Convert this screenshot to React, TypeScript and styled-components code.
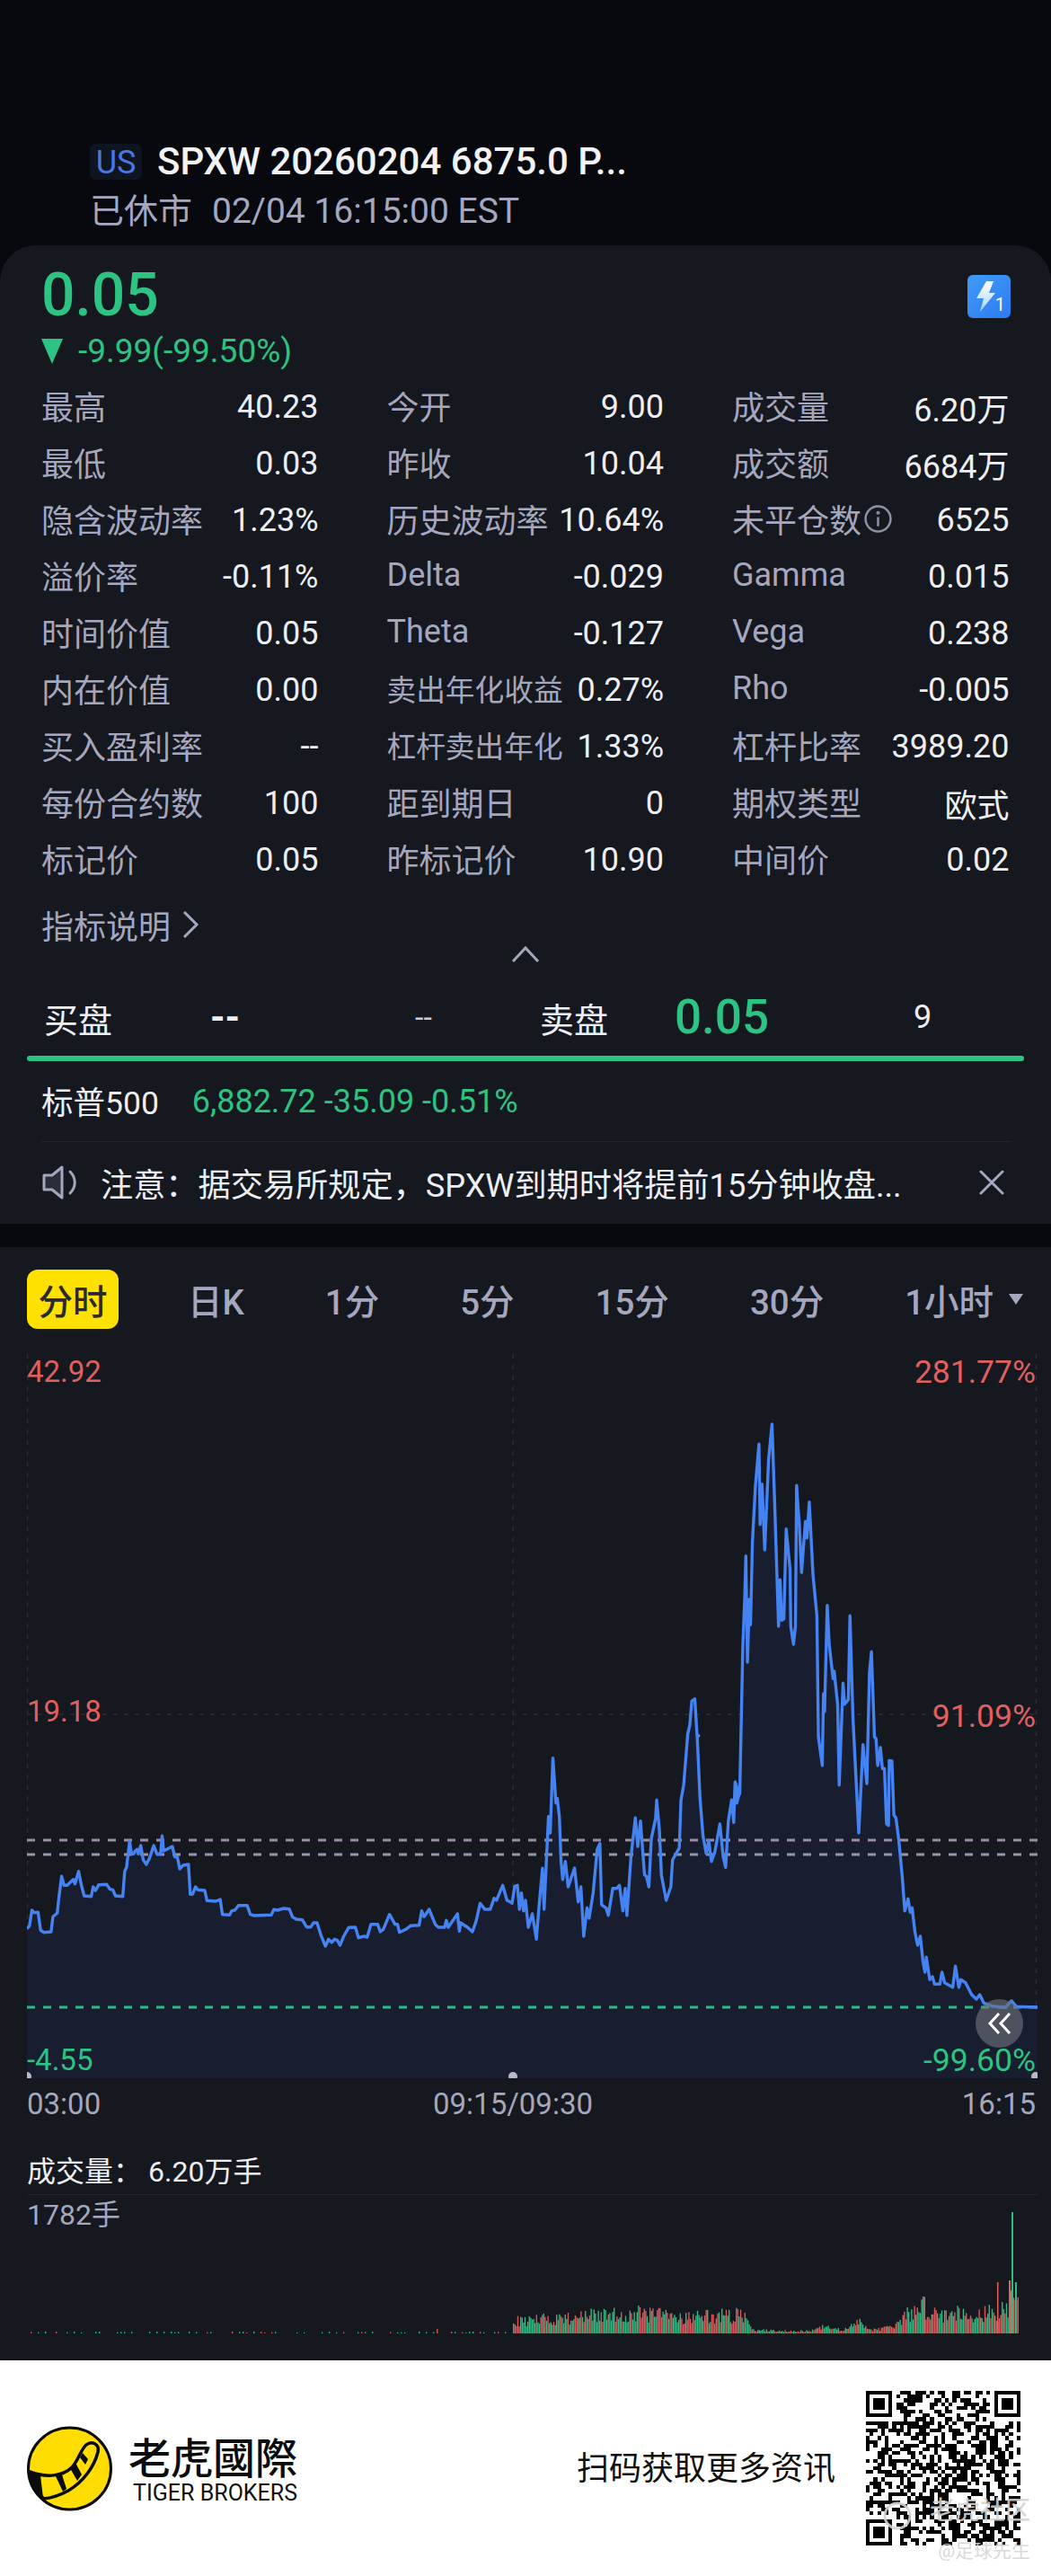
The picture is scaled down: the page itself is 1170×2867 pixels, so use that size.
import React from 'react';
import styled, { createGlobalStyle } from 'styled-components';

const GREEN = '#2dc382';
const RED = '#e0605f';
const MUTED = '#a5a7be';
const PANEL = '#16181f';

const GlobalStyle = createGlobalStyle`
  html, body {
    margin: 0;
    padding: 0;
    background: #07090f;
    font-family: Roboto, "Noto Sans CJK SC", sans-serif;
  }
`;

const Page = styled.div`
  width: 1170px;
  height: 2867px;
  display: flex;
  flex-direction: column;
  background: #07090f;
  overflow: hidden;
`;

/* header */
const Header = styled.header`
  height: 273px;
  box-sizing: border-box;
  padding: 158px 0 0 100px;
`;

const TitleRow = styled.div`
  display: flex;
  align-items: center;
  gap: 17px;
  height: 44px;
`;

const MarketBadge = styled.span`
  width: 58px;
  height: 40px;
  border-radius: 7px;
  background: #0e1420;
  color: #4a78e0;
  font-size: 36px;
  line-height: 42px;
  text-align: center;
`;

const Title = styled.div`
  color: #f2f2f5;
  font-size: 42px;
  font-weight: 500;
  line-height: 44px;
`;

const StatusLine = styled.div`
  margin-top: 11px;
  color: ${MUTED};
  font-size: 38px;
  line-height: 44px;
  display: flex;
  gap: 22px;
`;

const StatusTime = styled.span`
  font-size: 39px;
`;

/* quote card */
const Card = styled.section`
  height: 1089px;
  background: ${PANEL};
  border-radius: 40px 40px 0 0;
  box-sizing: border-box;
  padding-top: 23px;
`;

const PriceRow = styled.div`
  display: flex;
  justify-content: space-between;
  padding: 0 45px 0 46px;
`;

const Price = styled.div`
  color: ${GREEN};
  font-size: 66px;
  font-weight: 500;
  line-height: 66px;
`;

const Change = styled.div`
  display: flex;
  align-items: center;
  gap: 17px;
  margin-top: 9px;
  color: ${GREEN};
  font-size: 37px;
  line-height: 40px;
`;

const DownArrow = styled.span`
  width: 0;
  height: 0;
  border-left: 12px solid transparent;
  border-right: 12px solid transparent;
  border-top: 28px solid ${GREEN};
`;

const FlashBadge = styled.div`
  position: relative;
  width: 48px;
  height: 48px;
  margin-top: 10px;
  border-radius: 6px;
  background: linear-gradient(140deg, #3f9bf8, #2f7bf0);
  display: flex;
  align-items: center;
  padding-left: 8px;
  box-sizing: border-box;
`;

const FlashCount = styled.span`
  position: absolute;
  right: 6px;
  bottom: 5px;
  color: #fff;
  font-size: 20px;
  line-height: 20px;
`;

const StatsGrid = styled.div`
  display: grid;
  grid-template-columns: repeat(3, 308.5px);
  column-gap: 76px;
  grid-auto-rows: 62.9px;
  padding-left: 46px;
  margin-top: 10px;
`;

const Stat = styled.div`
  display: flex;
  align-items: center;
  justify-content: space-between;
  font-size: 36px;
`;

const StatLabel = styled.span<{ $long: boolean }>`
  display: flex;
  align-items: center;
  margin-bottom: 2px;
  color: ${MUTED};
  font-size: ${(p) => (p.$long ? '32.7px' : '36px')};
`;

const StatValue = styled.span`
  margin-top: 2px;
  color: #eceef2;
`;

const InfoIcon = styled.svg`
  width: 33px;
  height: 33px;
  margin-left: 2px;
`;

const GuideLink = styled.div`
  display: flex;
  align-items: center;
  gap: 12px;
  margin: 22px 0 0 46px;
  height: 40px;
  color: ${MUTED};
  font-size: 36px;
`;

const CollapseRow = styled.div`
  display: flex;
  justify-content: center;
  height: 20px;
  margin-top: 3px;
`;

const QuoteRow = styled.div`
  display: grid;
  grid-template-columns: 185px 228px 139px 150px 266px auto;
  align-items: center;
  height: 60px;
  margin-top: 29px;
  padding-left: 49px;
  color: #eceef2;
  font-size: 38px;
`;

const BoldDash = styled.span`
  font-size: 42px;
  font-weight: 700;
`;

const SmallDash = styled.span`
  font-size: 34px;
  color: #c9cad6;
`;

const AskPrice = styled.span`
  color: ${GREEN};
  font-size: 53px;
  font-weight: 500;
`;

const QuoteSize = styled.span`
  font-size: 36px;
`;

const DepthBar = styled.div`
  height: 6px;
  margin: 14px 30px 0;
  border-radius: 3px;
  background: ${GREEN};
`;

const IndexRow = styled.div`
  display: flex;
  align-items: center;
  gap: 37px;
  height: 50px;
  margin: 20px 45px 0 46px;
  padding-bottom: 19px;
  border-bottom: 1px solid #23262f;
  color: #eceef2;
  font-size: 35.5px;
`;

const IndexName = styled.span`
  margin-bottom: 3px;
`;

const IndexValue = styled.span`
  color: ${GREEN};
  font-size: 36px;
`;

const Notice = styled.div`
  display: flex;
  align-items: center;
  height: 50px;
  margin: 20px 52px 0 47px;
  color: #eceef2;
  font-size: 36.2px;
`;

const NoticeText = styled.span`
  flex: 1;
  margin-left: 25px;
  white-space: nowrap;
`;

/* chart section */
const ChartSection = styled.section`
  margin-top: 26px;
  height: 1239px;
  background: ${PANEL};
  box-sizing: border-box;
  padding: 25px 15px 0 30px;
`;

const Tabs = styled.div`
  display: flex;
  align-items: center;
  gap: 90px;
  height: 66px;
  color: ${MUTED};
  font-size: 38.5px;
  font-weight: 500;
`;

const Tab = styled.span<{ $active?: boolean }>`
  display: flex;
  align-items: center;
  white-space: nowrap;
  ${(p) =>
    p.$active &&
    `
    background: #ffe100;
    color: #2a2a2e;
    width: 102px;
    height: 66px;
    border-radius: 12px;
    justify-content: center;
    margin-right: -13px;
  `}
`;

const TabCaret = styled.span`
  width: 0;
  height: 0;
  margin-left: 17px;
  border-left: 8px solid transparent;
  border-right: 8px solid transparent;
  border-top: 12px solid ${MUTED};
`;

const PriceChart = styled.div`
  position: relative;
  width: 1125px;
  height: 806px;
  margin-top: 28px;
`;

const ChartSvg = styled.svg`
  display: block;
`;

const AxisLabel = styled.span<{ $top: number; $right?: boolean; $up?: boolean }>`
  position: absolute;
  top: ${(p) => p.$top}px;
  ${(p) => (p.$right ? 'right: 2px; font-size: 35.5px;' : 'left: 0; font-size: 33px;')}
  color: ${(p) => (p.$up ? RED : GREEN)};
  line-height: 40px;
`;

const ScrollButton = styled.div`
  position: absolute;
  left: 1056px;
  top: 718px;
  width: 53px;
  height: 54px;
  border-radius: 50%;
  background: rgba(112, 114, 124, 0.62);
  display: flex;
  align-items: center;
  justify-content: center;
`;

const TimeAxis = styled.div`
  display: grid;
  grid-template-columns: 452px auto 1fr;
  height: 40px;
  width: 1123px;
  margin-top: 9px;
  color: ${MUTED};
  font-size: 33px;
  line-height: 40px;
`;

const TimeEnd = styled.span`
  justify-self: end;
`;

const VolumeTitle = styled.div`
  margin-top: 35px;
  height: 40px;
  color: #eceef2;
  font-size: 32px;
  line-height: 40px;
  display: flex;
  gap: 7px;
`;

const VolumeChart = styled.div`
  position: relative;
  width: 1125px;
  margin-top: 5px;
  border-top: 1px solid #21242c;
`;

const VolumeMax = styled.span`
  position: absolute;
  left: 0;
  top: 2px;
  color: ${MUTED};
  font-size: 32px;
  line-height: 40px;
`;

/* footer */
const Footer = styled.footer`
  position: relative;
  flex: 1;
  background: #fff;
  display: flex;
  align-items: center;
  padding: 0 34px 0 30px;
`;

const Brand = styled.div`
  display: flex;
  align-items: center;
  gap: 18px;
`;

const BrandText = styled.div`
  display: flex;
  flex-direction: column;
  align-items: flex-end;
`;

const BrandName = styled.div`
  color: #0c0c0c;
  font-family: "Noto Sans CJK TC", sans-serif;
  font-size: 47px;
  font-weight: 500;
  line-height: 52px;
`;

const BrandLatin = styled.div`
  margin-top: 3px;
  color: #111;
  font-size: 25px;
  line-height: 26px;
`;

const ScanText = styled.div`
  margin-left: auto;
  margin-right: 34px;
  margin-top: -6px;
  color: #111;
  font-size: 36px;
`;

const Watermark = styled.span`
  position: absolute;
  right: 23px;
  color: rgba(212, 212, 212, 0.9);
  line-height: 1;
`;

const WatermarkSite = styled(Watermark)`
  top: 154px;
  font-size: 28px;
  font-weight: 500;
`;

const WatermarkUser = styled(Watermark)`
  top: 202px;
  font-size: 21px;
`;

const WatermarkRing = styled.svg`
  position: absolute;
  left: 982px;
  top: 156px;
`;

/* data */
const stats: { label: string; value: string; info?: boolean }[] = [
  { label: '最高', value: '40.23' },
  { label: '今开', value: '9.00' },
  { label: '成交量', value: '6.20万' },
  { label: '最低', value: '0.03' },
  { label: '昨收', value: '10.04' },
  { label: '成交额', value: '6684万' },
  { label: '隐含波动率', value: '1.23%' },
  { label: '历史波动率', value: '10.64%' },
  { label: '未平仓数', value: '6525', info: true },
  { label: '溢价率', value: '-0.11%' },
  { label: 'Delta', value: '-0.029' },
  { label: 'Gamma', value: '0.015' },
  { label: '时间价值', value: '0.05' },
  { label: 'Theta', value: '-0.127' },
  { label: 'Vega', value: '0.238' },
  { label: '内在价值', value: '0.00' },
  { label: '卖出年化收益', value: '0.27%' },
  { label: 'Rho', value: '-0.005' },
  { label: '买入盈利率', value: '--' },
  { label: '杠杆卖出年化', value: '1.33%' },
  { label: '杠杆比率', value: '3989.20' },
  { label: '每份合约数', value: '100' },
  { label: '距到期日', value: '0' },
  { label: '期权类型', value: '欧式' },
  { label: '标记价', value: '0.05' },
  { label: '昨标记价', value: '10.90' },
  { label: '中间价', value: '0.02' },
];

// traced from the reference, three stretches at different scales
const morning = [
  0,350, 8,340, 16,288, 24,296, 36,295, 44,355, 55,362, 78,360, 84,310, 98,298, 104,240, 112,175, 120,205, 130,205,
  150,185, 155,200, 167,158, 176,205, 185,240, 208,242, 214,210, 222,222, 232,203, 258,202, 268,218, 278,220, 286,240,
  310,242, 316,158, 322,145, 332,58, 338,100, 345,100, 350,90, 356,85, 360,100, 368,72, 376,120, 386,135, 396,115,
  410,72, 420,100, 432,100, 437,40, 442,90, 470,75, 478,110, 486,110, 494,150, 505,138, 522,135, 528,235, 535,235,
  545,210, 552,220, 575,222, 582,256, 610,258, 625,252, 632,302, 655,304, 662,290, 672,288, 684,272, 712,272, 722,302,
  735,306, 790,304, 798,286, 810,288, 830,282, 848,284, 858,310, 870,318, 890,320, 904,344, 918,344, 926,330, 938,330,
  950,370, 965,408, 975,385, 985,395, 995,385, 1003,388, 1012,405, 1024,375, 1040,346, 1062,345, 1072,380, 1090,375,
  1100,378, 1112,335, 1134,335, 1142,360, 1152,352, 1172,302, 1190,335, 1198,335, 1204,362, 1225,352, 1240,340,
  1268,338, 1276,290, 1284,310, 1300,285, 1320,335, 1330,345, 1350,345, 1356,322, 1362,345, 1392,300, 1398,358,
  1402,330, 1424,345, 1440,360, 1452,325, 1465,265, 1480,285, 1498,285, 1510,248, 1518,255, 1538,205, 1552,255, 1565,262,
];
const open1 = [
  0,655, 8,598, 16,595, 22,675, 28,620, 34,680, 40,645, 48,735, 60,690, 72,775, 80,665, 90,538, 95,675, 108,365, 113,420,
  121,170, 130,320, 134,305, 140,365, 145,515, 150,575, 158,515, 166,600, 185,537, 196,650, 204,600, 212,765, 222,670,
  228,705, 240,620, 252,475, 260,455, 265,660, 278,670, 285,695, 298,605, 310,605, 318,595, 328,680, 335,605, 340,695,
  352,500, 365,370, 372,465, 380,380, 392,560, 398,565, 405,600, 412,440, 425,370, 428,310, 436,408, 442,560, 456,645,
  470,600, 475,510, 485,490, 495,470, 500,310, 508,260, 520,90, 526,60,
];
const peak1 = [632,1180, 640,1172, 646,1300, 650,1295];
const open2 = [
  548,100, 556,300, 565,430, 575,490, 582,445, 590,515, 600,485, 615,390, 625,500, 632,535, 640,380, 650,310, 656,385,
  660,250, 665,320, 672,290,
];
const spike = [
  745,1450, 750,1495, 757,1490, 765,1000, 770,830, 773,695, 777,1050, 782,840, 785,925, 790,650, 798,460, 807,322, 810,590,
  815,455, 822,675, 832,375, 841,255, 848,520, 858,930, 862,775, 866,910, 872,905, 878,605, 888,740, 890,930, 897,990,
  902,930, 905,460, 910,555, 912,580, 918,750, 928,580, 932,635, 938,515, 948,760, 958,895, 962,1300, 972,1395, 975,1155,
  978,1215, 985,860, 990,990, 1000,1105, 1003,1080, 1012,1190, 1016,1460, 1026,1120, 1030,1190, 1040,1175, 1044,895, 1052,1240,
];
const dip = [1026,420];
const spike2 = [1078,1325, 1088,1455, 1095,1085, 1100,1015, 1108,1300, 1112,1305];
const fall = [
  1082,195, 1090,135, 1096,205, 1102,205, 1108,390, 1114,395, 1116,178, 1124,180, 1130,360, 1136,370, 1145,450, 1155,570,
  1162,680, 1172,640, 1178,685, 1184,670, 1192,750, 1200,795, 1208,765, 1216,850, 1222,885, 1226,835, 1236,910, 1244,900,
  1250,925, 1266,925, 1272,885, 1280,920, 1304,935, 1312,865, 1322,935, 1328,910, 1342,920, 1360,960, 1374,975, 1384,960,
  1396,988, 1420,998, 1460,1003, 1478,980, 1492,1000, 1555,1002,
];

const toPage = (pts: number[], x0: number, sx: number, y0: number) => {
  const out: [number, number][] = [];
  for (let i = 0; i < pts.length; i += 2) out.push([x0 + pts[i] / sx, y0 + pts[i + 1] / 3]);
  return out;
};

const linePoints: [number, number][] = [
  ...toPage(morning, 30, 2.904, 2030),
  ...toPage(open1, 570, 2.658, 1900),
  ...toPage(peak1, 500, 2.34, 1500),
  ...toPage(open2, 570, 2.658, 1900),
  ...toPage(spike, 500, 2.34, 1500),
  ...toPage(dip, 570, 2.658, 1900),
  ...toPage(spike2, 500, 2.34, 1500),
  ...toPage(fall, 570, 2.658, 1900),
];

const lineD = linePoints.map(([x, y]) => `${x.toFixed(1)},${y.toFixed(1)}`).join(' ');
const areaD = `30,2313 ${lineD} 1155,2313`;

const seeded = (seed: number) => () => {
  seed = (seed * 1664525 + 1013904223) >>> 0;
  return seed / 4294967296;
};

// volume envelope: page x -> typical bar height
const envelope: [number, number][] = [
  [571, 16], [640, 22], [712, 26], [760, 22], [830, 24], [838, 4], [900, 3], [915, 8], [940, 5], [958, 16], [968, 5],
  [995, 8], [1005, 22], [1027, 36], [1040, 26], [1070, 28], [1095, 26], [1118, 30], [1125, 44], [1133, 44],
];

const envAt = (x: number) => {
  for (let i = 1; i < envelope.length; i++) {
    const [x1, h1] = envelope[i];
    const [x0, h0] = envelope[i - 1];
    if (x <= x1) return h0 + ((x - x0) / (x1 - x0)) * (h1 - h0);
  }
  return 0;
};

const buildBars = () => {
  const rnd = seeded(7);
  const bars: { x: number; h: number; up: boolean }[] = [];
  for (let x = 30; x < 571; x += 4) {
    if (rnd() > 0.6) bars.push({ x, h: x > 480 && rnd() > 0.97 ? 5 : 1 + rnd(), up: rnd() > 0.6 });
  }
  for (let x = 571; x <= 1133; x += 1.6) {
    bars.push({ x, h: envAt(x) * (0.45 + rnd() * 0.75), up: rnd() > 0.5 });
  }
  return bars;
};

const buildQr = () => {
  const n = 41;
  const rnd = seeded(2024);
  const cells: string[] = [];
  const finder = (x: number, y: number, cx: number, cy: number) => {
    if (cx < x || cx > x + 6 || cy < y || cy > y + 6) return null;
    const dx = cx - x;
    const dy = cy - y;
    const ring = dx === 0 || dx === 6 || dy === 0 || dy === 6;
    const core = dx >= 2 && dx <= 4 && dy >= 2 && dy <= 4;
    return ring || core;
  };
  for (let y = 0; y < n; y++) {
    for (let x = 0; x < n; x++) {
      const quiet =
        (x <= 7 && y <= 7) || (x >= n - 8 && y <= 7) || (x <= 7 && y >= n - 8);
      let on: boolean | null = finder(0, 0, x, y) ?? finder(n - 7, 0, x, y) ?? finder(0, n - 7, x, y);
      if (on === null) on = quiet ? false : rnd() > 0.48;
      if (on) cells.push(`M${x} ${y}h1v1h-1z`);
    }
  }
  return cells.join('');
};

const bars = buildBars();
const qrPath = buildQr();

const FlashGlyph = () => (
  <svg width="24" height="38" viewBox="0 0 24 38">
    <defs>
      <linearGradient id="bolt" x1="0" y1="0" x2="0" y2="1">
        <stop offset="0" stopColor="#ffffff" />
        <stop offset="1" stopColor="#a9d3ff" />
      </linearGradient>
    </defs>
    <path d="M13 2 L21 2 L16 15 L23 15 L6 36 L10 21 L2 21 Z" fill="url(#bolt)" />
  </svg>
);

const SpeakerIcon = () => (
  <svg width="40" height="38" viewBox="0 0 40 38" fill="none" stroke={MUTED} strokeWidth="3" strokeLinejoin="round" strokeLinecap="round">
    <path d="M2 11 H11 L22 2 V36 L11 27 H2 Z" fill="#2a2d38" />
    <path d="M31 7 C38 14 38 24 31 31" />
  </svg>
);

const CloseIcon = () => (
  <svg width="28" height="28" viewBox="0 0 28 28" stroke={MUTED} strokeWidth="3" strokeLinecap="round">
    <path d="M2 2 L26 26 M26 2 L2 26" />
  </svg>
);

const TigerLogo = () => (
  <svg width="95" height="95" viewBox="0 0 95 95">
    <ellipse cx="47.5" cy="47.5" rx="46" ry="45.5" fill="#ffdd00" stroke="#0b0b0b" strokeWidth="3" />
    <path
      d="M3 51 C22 58 40 56 50 46 C57 39 60 26 66 21 C72 16 81 20 79 29 C75 45 63 62 46 72 C37 77 28 80 19 81 C9 74 4 62 3 51 Z"
      fill="#ffdd00"
      stroke="#0b0b0b"
      strokeWidth="3.5"
    />
    <path d="M3 52 L15 55 L18 80 L15 80 C8 72 3 62 3 52 Z" fill="#0b0b0b" />
    <path d="M32 56 L39 54 L44 70 L40 73 Z" fill="#0b0b0b" />
    <path d="M48 47 L54 41 L61 54 L56 61 Z" fill="#0b0b0b" />
    <path d="M59 35 L62 30 L68 37 L65 43 Z" fill="#0b0b0b" />
  </svg>
);

const App: React.FC = () => {
  return (
    <Page>
      <GlobalStyle />
      <Header>
        <TitleRow>
          <MarketBadge>US</MarketBadge>
          <Title>SPXW 20260204 6875.0 P...</Title>
        </TitleRow>
        <StatusLine>
          <span>已休市</span>
          <StatusTime>02/04 16:15:00 EST</StatusTime>
        </StatusLine>
      </Header>

      <Card>
        <PriceRow>
          <div>
            <Price>0.05</Price>
            <Change>
              <DownArrow />
              <span>-9.99(-99.50%)</span>
            </Change>
          </div>
          <FlashBadge>
            <FlashGlyph />
            <FlashCount>1</FlashCount>
          </FlashBadge>
        </PriceRow>

        <StatsGrid>
          {stats.map((s) => (
            <Stat key={s.label}>
              <StatLabel $long={s.label.length > 5}>
                {s.label}
                {s.info && (
                  <InfoIcon viewBox="0 0 32 32" fill="none" stroke="#8f91a4" strokeWidth="2.4">
                    <circle cx="16" cy="16" r="13.5" />
                    <path d="M16 14 V24" />
                    <circle cx="16" cy="9.5" r="0.8" />
                  </InfoIcon>
                )}
              </StatLabel>
              <StatValue>{s.value}</StatValue>
            </Stat>
          ))}
        </StatsGrid>

        <GuideLink>
          指标说明
          <svg width="20" height="32" viewBox="0 0 20 32" fill="none" stroke={MUTED} strokeWidth="3">
            <path d="M3 2 L17 16 L3 30" />
          </svg>
        </GuideLink>

        <CollapseRow>
          <svg width="32" height="20" viewBox="0 0 32 20" fill="none" stroke={MUTED} strokeWidth="3">
            <path d="M2 18 L16 3 L30 18" />
          </svg>
        </CollapseRow>

        <QuoteRow>
          <span>买盘</span>
          <BoldDash>--</BoldDash>
          <SmallDash>--</SmallDash>
          <span>卖盘</span>
          <AskPrice>0.05</AskPrice>
          <QuoteSize>9</QuoteSize>
        </QuoteRow>
        <DepthBar />

        <IndexRow>
          <IndexName>标普500</IndexName>
          <IndexValue>6,882.72 -35.09 -0.51%</IndexValue>
        </IndexRow>

        <Notice>
          <SpeakerIcon />
          <NoticeText>注意：据交易所规定，SPXW到期时将提前15分钟收盘...</NoticeText>
          <CloseIcon />
        </Notice>
      </Card>

      <ChartSection>
        <Tabs>
          <Tab $active>分时</Tab>
          <Tab>日K</Tab>
          <Tab>1分</Tab>
          <Tab>5分</Tab>
          <Tab>15分</Tab>
          <Tab>30分</Tab>
          <Tab>
            1小时
            <TabCaret />
          </Tab>
        </Tabs>

        <PriceChart>
          <ChartSvg width="1125" height="806" viewBox="30 1507 1125 806">
            <g stroke="#2a2d36" strokeWidth="1.5" strokeDasharray="5 7">
              <path d="M30.5 1507 V2313 M571 1507 V2313 M1153.5 1507 V2313 M30 1908 H1155" />
            </g>
            <polygon points={areaD} fill="#181e30" />
            <g strokeWidth="3" strokeDasharray="9 9">
              <path d="M30 2048 H1155" stroke="#9a8ba6" />
              <path d="M30 2064 H1155" stroke="#9595ab" />
              <path d="M30 2234 H1155" stroke="#2dbb85" />
            </g>
            <polyline points={lineD} fill="none" stroke="#4582f2" strokeWidth="3.4" strokeLinejoin="round" />
            <circle cx="30" cy="2311" r="5" fill="#b8bacb" />
            <circle cx="571" cy="2311" r="5" fill="#b8bacb" />
            <circle cx="1153" cy="2311" r="5" fill="#b8bacb" />
          </ChartSvg>
          <AxisLabel $top={0} $up>42.92</AxisLabel>
          <AxisLabel $top={0} $right $up>281.77%</AxisLabel>
          <AxisLabel $top={378} $up>19.18</AxisLabel>
          <AxisLabel $top={383} $right $up>91.09%</AxisLabel>
          <AxisLabel $top={766}>-4.55</AxisLabel>
          <AxisLabel $top={766} $right>-99.60%</AxisLabel>
          <ScrollButton>
            <svg width="28" height="24" viewBox="0 0 28 24" fill="none" stroke="#fff" strokeWidth="3">
              <path d="M13 1 L3 12 L13 23 M25 1 L15 12 L25 23" />
            </svg>
          </ScrollButton>
        </PriceChart>

        <TimeAxis>
          <span>03:00</span>
          <span>09:15/09:30</span>
          <TimeEnd>16:15</TimeEnd>
        </TimeAxis>

        <VolumeTitle>
          <span>成交量：</span>
          <span>6.20万手</span>
        </VolumeTitle>

        <VolumeChart>
          <ChartSvg width="1125" height="156" viewBox="30 2443 1125 156">
            {bars.map((b, i) => (
              <rect key={i} x={b.x} y={2597 - b.h} width="1.4" height={b.h} fill={b.up ? '#d9585a' : '#2dbb80'} />
            ))}
            <rect x="1126" y="2462" width="2" height="135" fill="#2dbb80" />
            <rect x="1123" y="2538" width="2" height="59" fill="#e0605f" />
            <rect x="1130" y="2540" width="2" height="57" fill="#2dbb80" />
            <rect x="1110" y="2540" width="1.5" height="57" fill="#e0605f" />
            <rect x="1027" y="2556" width="1.5" height="41" fill="#e0605f" />
          </ChartSvg>
          <VolumeMax>1782手</VolumeMax>
        </VolumeChart>
      </ChartSection>

      <Footer>
        <Brand>
          <TigerLogo />
          <BrandText>
            <BrandName>老虎國際</BrandName>
            <BrandLatin>TIGER BROKERS</BrandLatin>
          </BrandText>
        </Brand>
        <ScanText>扫码获取更多资讯</ScanText>
        <svg width="172" height="172" viewBox="0 0 41 41" shapeRendering="crispEdges">
          <path d={qrPath} fill="#000" />
        </svg>
        <WatermarkRing width="34" height="34" viewBox="0 0 34 34" fill="none" stroke="rgba(212,212,212,.9)" strokeWidth="3">
          <circle cx="17" cy="17" r="14" />
        </WatermarkRing>
        <WatermarkSite>老虎社区</WatermarkSite>
        <WatermarkUser>@足球先生</WatermarkUser>
      </Footer>
    </Page>
  );
};

export default App;
